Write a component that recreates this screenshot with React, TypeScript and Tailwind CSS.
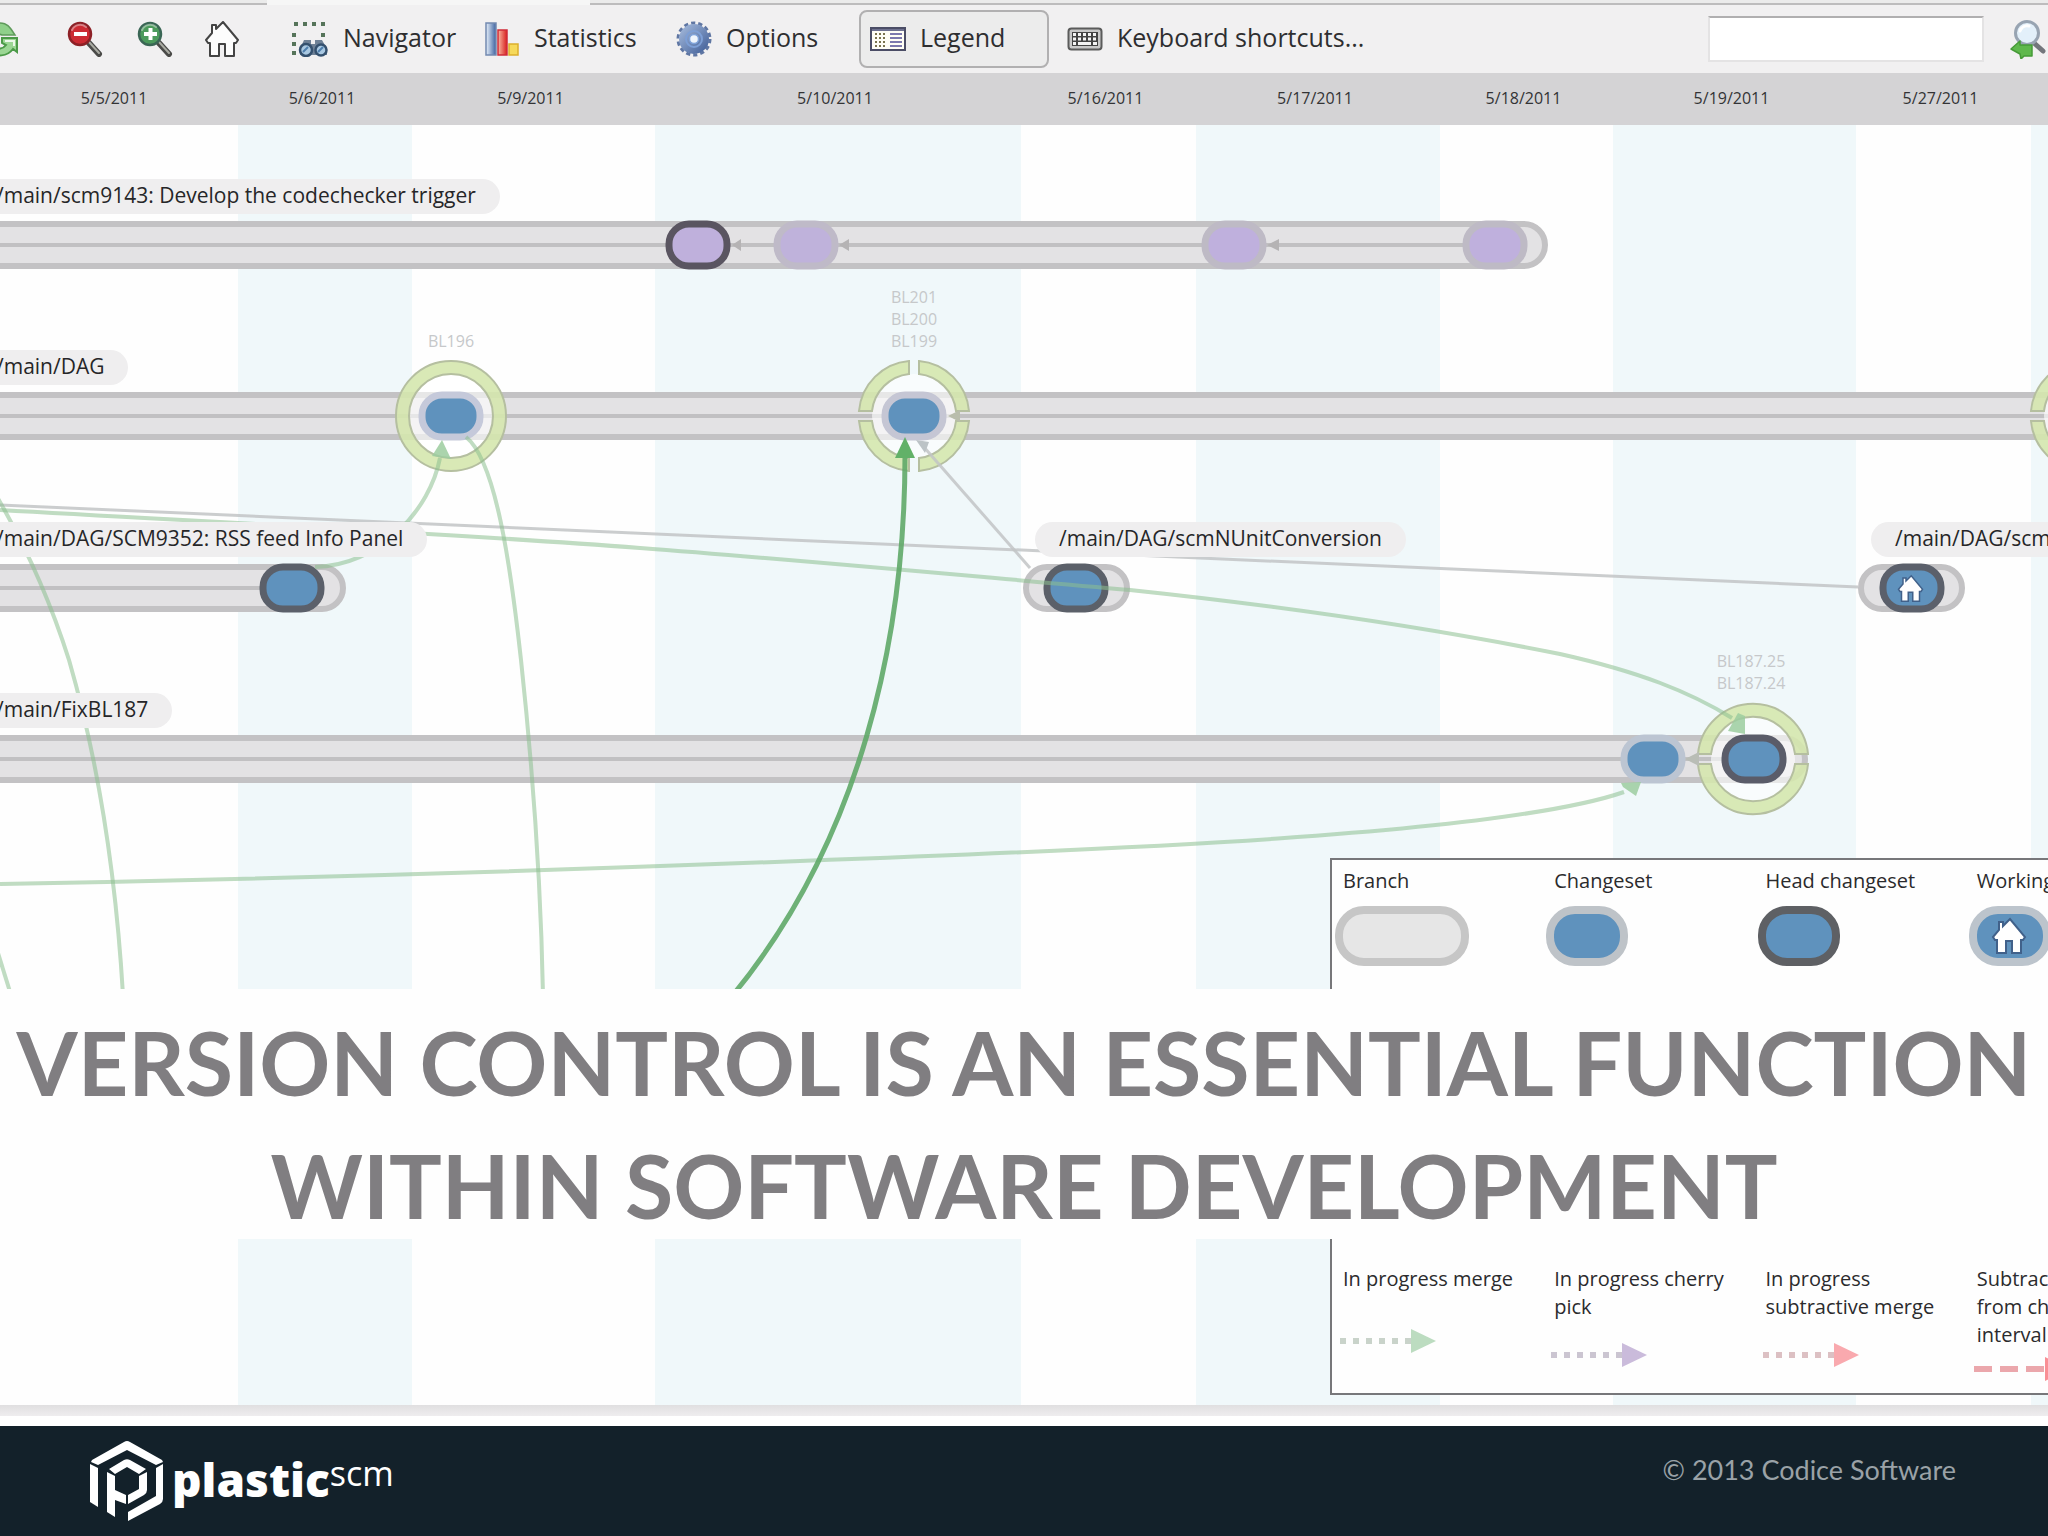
import type { ReactNode } from "react";

const BLUE = "#5f92bd";
const EDGE = "#8cc08f";

const columns = [
  { date: "5/5/2011", shaded: false },
  { date: "5/6/2011", shaded: true },
  { date: "5/9/2011", shaded: false },
  { date: "5/10/2011", shaded: true },
  { date: "5/16/2011", shaded: false },
  { date: "5/17/2011", shaded: true },
  { date: "5/18/2011", shaded: false },
  { date: "5/19/2011", shaded: true },
  { date: "5/27/2011", shaded: false },
  { date: "", shaded: true },
];

const columnGrid =
  "grid -ml-1 grid-cols-[242px_174px_243px_366px_175px_244px_173px_243px_175px_1fr]";

/* ---------- toolbar icons ---------- */

function RefreshIcon() {
  return (
    <svg className="h-9 w-9 shrink-0" viewBox="0 0 36 36" fill="none">
      <path d="M5 15A13 13 0 0 1 29 8l4 6H20a8 8 0 0 0-9 2z" fill="#8fd08a" stroke="#5f9a5b" strokeWidth="1.5" />
      <path d="M20 17h15v14l-4-3c-6 8-17 8-23 3l4-6c4 4 9 3 12-1l-4-2z" fill="#9bd694" stroke="#4c9a48" strokeWidth="2" />
      <path d="M23 20h9v5" stroke="#ecf8ea" strokeWidth="2" />
    </svg>
  );
}

function MagnifierIcon({ color, dark, plus }: { color: string; dark: string; plus?: boolean }) {
  return (
    <svg className="h-9 w-9" viewBox="0 0 36 36" fill="none" strokeLinecap="round">
      <path d="M22 22 32 33" stroke="#4a4a48" strokeWidth="6" />
      <path d="M22 21 32 32" stroke="#a9aaa2" strokeWidth="2" />
      <circle cx="13" cy="13" r="11" fill={color} stroke={dark} strokeWidth="2.5" />
      <path d="M5 9a9 9 0 0 1 14-3" stroke="#fff" strokeOpacity=".4" strokeWidth="2" />
      <path d="M7 13h13" stroke="#fff" strokeWidth="4" strokeLinecap="butt" />
      {plus && <path d="M13.500 7v12" stroke="#fff" strokeWidth="4" strokeLinecap="butt" />}
    </svg>
  );
}

const HOUSE = "M2 19 8 12V4h4v4l7-7 15 18-2 3h-2v13H21V23h-6v12H6V22H4z";

function HomeIcon() {
  return (
    <svg className="h-9 w-9" viewBox="0 0 36 36">
      <path d={HOUSE} fill="#fdfdfd" stroke="#444" strokeWidth="2" strokeLinejoin="round" />
    </svg>
  );
}

function NavigatorIcon() {
  return (
    <svg className="h-9 w-9 shrink-0" viewBox="0 0 36 36">
      <path d="M2 3h32M2 12v22M31 12v5" stroke="#56745a" strokeWidth="4" strokeDasharray="4 5" fill="none" />
      <path d="M12 19h7v4h4v-4h7l5 9v6H8v-6z" fill="#6f8196" />
      <circle cx="14" cy="29" r="6" fill="#a9c8e2" stroke="#34506e" strokeWidth="2.5" />
      <circle cx="29" cy="29" r="5.500" fill="#a9c8e2" stroke="#34506e" strokeWidth="2.500" />
      <path d="M11 31l5-5M26 31l5-5" stroke="#4f7fae" strokeWidth="2" />
    </svg>
  );
}

function StatisticsIcon() {
  return (
    <svg className="h-9 w-9 shrink-0" viewBox="0 0 36 36">
      <defs>
        <linearGradient id="bar-blue" x2="1">
          <stop stopColor="#e8f1fb" />
          <stop offset="1" stopColor="#3d62a0" />
        </linearGradient>
        <linearGradient id="bar-red" x2="1">
          <stop stopColor="#f9b8a0" />
          <stop offset="1" stopColor="#d81f1f" />
        </linearGradient>
      </defs>
      <rect x="2" y="2" width="10" height="32" fill="url(#bar-blue)" stroke="#7389b0" strokeWidth="1.5" />
      <rect x="14" y="9" width="9" height="25" fill="url(#bar-red)" stroke="#cf2b38" strokeWidth="1.5" />
      <rect x="25" y="23" width="9" height="11" fill="#f6d95a" stroke="#dcae2c" strokeWidth="1.5" />
    </svg>
  );
}

function GearIcon() {
  return (
    <svg className="h-9 w-9 shrink-0" viewBox="0 0 36 36">
      <defs>
        <linearGradient id="gear" x2="1" y2="1">
          <stop stopColor="#a9bedf" />
          <stop offset="1" stopColor="#3d5b95" />
        </linearGradient>
      </defs>
      <circle cx="18" cy="18" r="16" fill="none" stroke="#5f76a3" strokeWidth="3" strokeDasharray="4.200 3" />
      <circle cx="18" cy="18" r="15" fill="url(#gear)" />
      <circle cx="18" cy="18" r="8" fill="none" stroke="#7d9fd6" strokeWidth="2" />
      <circle cx="18" cy="18" r="4.500" fill="#eef4fc" stroke="#7fa3da" strokeWidth="1.500" />
    </svg>
  );
}

function LegendIcon() {
  return (
    <svg className="h-6 w-9 shrink-0" viewBox="0 0 36 24">
      <rect x="1" y="1" width="34" height="22" fill="#fffef6" stroke="#4b4d66" strokeWidth="2" />
      <path d="M2 3h32" stroke="#6e7190" strokeWidth="2" />
      <path d="M5 7h11M5 11h11M5 15h11M5 19h11" stroke="#7a744e" strokeWidth="2" strokeDasharray="2 2" />
      <path d="M20 7h12M20 11h12M20 15h12M20 19h12" stroke="#7c79ae" strokeWidth="2" />
    </svg>
  );
}

function KeyboardIcon() {
  return (
    <svg className="h-6 w-9 shrink-0" viewBox="0 0 36 24">
      <rect x="1.500" y="1.500" width="33" height="21" rx="3" fill="#c9c9c9" stroke="#5b5b5b" strokeWidth="2" />
      <rect x="5" y="5" width="26" height="14" fill="#444" />
      <path d="M6 7.500h24M6 12h24" stroke="#f4f4f4" strokeWidth="3" strokeDasharray="3 2" />
      <path d="M6 16.500h3M11 16.500h13M26 16.500h4" stroke="#f4f4f4" strokeWidth="3" />
    </svg>
  );
}

function FindIcon() {
  return (
    <svg className="h-10 w-9" viewBox="0 0 36 40" fill="none" strokeLinecap="round">
      <path d="M24 24 33 32" stroke="#73767c" strokeWidth="5" />
      <circle cx="17" cy="14" r="11.500" fill="#e3f0fa" stroke="#98a4b2" strokeWidth="3" />
      <path d="M10 12a8 8 0 0 1 9-5" stroke="#fff" strokeWidth="3" />
      <path d="M1 30 10 22v4h12v11h-8l-3 3-1-5z" fill="#5fb84c" stroke="#469a37" strokeWidth="1.5" strokeLinejoin="round" />
    </svg>
  );
}

function ToolButton({ icon, label, className }: { icon: ReactNode; label: string; className: string }) {
  return (
    <button type="button" className={`flex shrink-0 items-center whitespace-nowrap ${className}`}>
      {icon}
      <span className="pb-[3px]">{label}</span>
    </button>
  );
}

function Toolbar() {
  return (
    <header className="bg-[#f1f0f1]">
      <div className="flex h-[5px]">
        <div className="w-[267px] border-b-2 border-[#bdbcbd] bg-[#ebebeb]" />
        <div className="w-[323px] bg-[#f6f6f6]" />
        <div className="flex-1 border-b-2 border-[#bdbcbd] bg-[#ebebeb]" />
      </div>
      <div className="flex h-[68px] items-center text-[25px] text-[#2e2e30]">
        <button type="button" aria-label="Refresh" className="flex w-[18px] shrink-0 justify-end overflow-hidden">
          <RefreshIcon />
        </button>
        <button type="button" aria-label="Zoom out" className="ml-[49px]">
          <MagnifierIcon color="#cc2b33" dark="#8d2026" />
        </button>
        <button type="button" aria-label="Zoom in" className="ml-[34px]">
          <MagnifierIcon color="#4c9a5c" dark="#3a6655" plus />
        </button>
        <button type="button" aria-label="Home" className="ml-[31px]">
          <HomeIcon />
        </button>
        <ToolButton className="ml-[52px] w-[192px] gap-[15px]" icon={<NavigatorIcon />} label="Navigator" />
        <ToolButton className="w-[192px] gap-[14px]" icon={<StatisticsIcon />} label="Statistics" />
        <ToolButton className="w-[183px] gap-[14px]" icon={<GearIcon />} label="Options" />
        <ToolButton
          className="h-[58px] w-[190px] gap-[14px] rounded-lg border-2 border-[#b1b0b1] bg-[#ececec] pl-[9px]"
          icon={<LegendIcon />}
          label="Legend"
        />
        <ToolButton className="ml-[18px] gap-[14px]" icon={<KeyboardIcon />} label="Keyboard shortcuts..." />
        <input
          type="search"
          aria-label="Search"
          className="ml-auto h-[46px] w-[276px] border-2 border-[#e4e3e4] border-t-[#b0afb0] bg-white px-2 outline-none"
        />
        <button type="button" aria-label="Find" className="mr-[2px] ml-[26px]">
          <FindIcon />
        </button>
      </div>
    </header>
  );
}

/* ---------- branch diagram ---------- */

function Branch({ x1, x2, cy, line = true }: { x1: number; x2: number; cy: number; line?: boolean }) {
  return (
    <g>
      <rect x={x1 + 3} y={cy - 21} width={x2 - x1 - 6} height="42" rx="21" fill="#e3e2e4" stroke="#c3c2c4" strokeWidth="6" />
      {line && <path d={`M${x1} ${cy}H${x2 - 46}`} stroke="#c1c0c2" strokeWidth="4" />}
    </g>
  );
}

function Changeset({ cx, cy, fill, stroke }: { cx: number; cy: number; fill: string; stroke: string }) {
  return <rect x={cx - 29} y={cy - 21} width="58" height="42" rx="20" fill={fill} stroke={stroke} strokeWidth="7" />;
}

function Ring({ cx, cy, gaps }: { cx: number; cy: number; gaps: "none" | "sides" | "all" }) {
  const arcs = {
    none: "M0-55A55 55 0 1 1 0 55A55 55 0 1 1 0-55ZM0-42A42 42 0 1 0 0 42A42 42 0 1 0 0-42Z",
    sides:
      "M-55-5A55.230 55.230 0 0 1 55-5H42A42.300 42.300 0 0 0-42-5ZM-55 5A55.230 55.230 0 0 0 55 5H42A42.300 42.300 0 0 1-42 5Z",
    all: "M-55-5A55 55 0 0 1-5-55V-42A42 42 0 0 0-42-5ZM55-5A55 55 0 0 0 5-55V-42A42 42 0 0 1 42-5ZM-55 5A55 55 0 0 0-5 55V42A42 42 0 0 1-42 5ZM55 5A55 55 0 0 1 5 55V42A42 42 0 0 0 42 5Z",
  };
  return (
    <g transform={`translate(${cx} ${cy})`}>
      <circle r="42" fill="#fff" fillOpacity=".6" />
      <path d={arcs[gaps]} fill="#d5e7ae" fillOpacity=".9" stroke="#b5bfa0" strokeWidth="2" />
    </g>
  );
}

function Diagram() {
  return (
    <svg
      className="absolute top-0 left-0 h-[1280px] w-[2048px]"
      viewBox="0 125 2048 1280"
      fill="none"
      role="img"
      aria-label="Branch explorer diagram"
    >
      <Branch x1={-40} x2={1548} cy={245} />
      <Branch x1={-40} x2={2140} cy={416} />
      <Branch x1={-40} x2={346} cy={588} />
      <Branch x1={1023} x2={1130} cy={588} line={false} />
      <Branch x1={1858} x2={1965} cy={588} line={false} />
      <Branch x1={-40} x2={1808} cy={759} />

      <Ring cx={451} cy={416} gaps="none" />
      <Ring cx={914} cy={416} gaps="all" />
      <Ring cx={2086} cy={416} gaps="all" />
      <Ring cx={1753} cy={759} gaps="sides" />

      <Changeset cx={698} cy={245} fill="#bfb0dc" stroke="#5a5561" />
      <Changeset cx={806} cy={245} fill="#bfb2db" stroke="#bfbac8" />
      <Changeset cx={1234} cy={245} fill="#bfb0dd" stroke="#bebac5" />
      <Changeset cx={1495} cy={245} fill="#bfb0dd" stroke="#bebac5" />
      <path d="m732 245 9-6v12zm107 0 10-6v12zm428 0 12-6v12z" fill="#b5b3b4" />

      <Changeset cx={451} cy={416} fill={BLUE} stroke="#c5c9da" />
      <Changeset cx={914} cy={416} fill={BLUE} stroke="#c5c6d4" />
      <path d="M948 416l12-6v12z" fill="#b9bdac" />

      <Changeset cx={292} cy={588} fill={BLUE} stroke="#5b606a" />
      <Changeset cx={1076} cy={588} fill={BLUE} stroke="#5b6069" />
      <Changeset cx={1912} cy={588} fill={BLUE} stroke="#5b606b" />
      <g transform="translate(1897 575) scale(.75)">
        <path d={HOUSE} fill="#fff" stroke="#41618a" strokeWidth="2" />
      </g>

      <Changeset cx={1653} cy={759} fill={BLUE} stroke="#bcc5d2" />
      <Changeset cx={1754} cy={759} fill={BLUE} stroke="#5a5c69" />
      <path d="M1685 759l14-7v14z" fill="#b9bdb6" />

      <g stroke="#c2c4c6" strokeWidth="3" strokeOpacity=".85">
        <path d="M0 505 1858 587" />
        <path d="M923 446 1030 568" />
      </g>
      <path d="m916 440 13 2-4 11z" fill="#bcc3c6" />

      <g stroke={EDGE} strokeWidth="4" strokeOpacity=".55">
        <path d="M0 510C210 522 430 532 640 548C800 560 980 577 1130 590C1300 608 1440 630 1560 654C1640 672 1690 692 1732 718" />
        <path d="M-4 495C25 545 50 600 69 660C95 750 115 860 123 995" />
        <path d="M-2 953 11 995" />
        <path d="M466 437C495 460 510 560 521 660C535 790 541 890 543 995" />
        <path d="M315 567C380 565 430 510 440 458" />
        <path d="M0 884C270 879 540 871 800 861C1100 850 1500 835 1624 792" />
      </g>
      <g fill="#9ccd9f" fillOpacity=".85">
        <path d="m442 440 9 19-19-3z" />
        <path d="m1745 734-17-3 10-18 7 3z" />
        <path d="m1641 782-5 14-13-9-2-4z" />
      </g>

      <path d="M733 995C860 840 905 640 905 455" stroke="#5fa968" strokeWidth="5" strokeOpacity=".9" />
      <path d="m905 437 10 21h-20z" fill="#62b168" />
    </svg>
  );
}

function BranchLabel({ className, children }: { className: string; children: ReactNode }) {
  return (
    <div
      className={`absolute h-[35px] bg-[#efeeef] text-[21px] leading-[33px] whitespace-nowrap text-[#262628] ${className}`}
    >
      {children}
    </div>
  );
}

function ChangesetLabels({ className, names }: { className: string; names: string[] }) {
  return (
    <ul className={`absolute w-24 text-center text-base leading-[22px] text-[#c6c8ca] ${className}`}>
      {names.map((name) => (
        <li key={name}>{name}</li>
      ))}
    </ul>
  );
}

/* ---------- legend ---------- */

function LegendPill({ width, fill, stroke, house }: { width: number; fill: string; stroke: string; house?: boolean }) {
  return (
    <svg className="mt-[11px] -ml-2 block h-[60px]" width={width} viewBox={`0 0 ${width} 60`}>
      <rect x="4" y="4" width={width - 8} height="52" rx="25" fill={fill} stroke={stroke} strokeWidth="8" />
      {house && (
        <g transform="translate(22 12)">
          <path d={HOUSE} fill="#fff" stroke="#41618a" strokeWidth="2" />
        </g>
      )}
    </svg>
  );
}

function LegendArrow({ line, head, dash, className }: { line: string; head: string; dash: string; className: string }) {
  return (
    <svg className={`-ml-1 block h-6 w-[98px] ${className}`} viewBox="0 0 98 24">
      <path d="M1 12H74" stroke={line} strokeWidth="6" strokeDasharray={dash} />
      <path d="M72 0 97 12 72 24z" fill={head} />
    </svg>
  );
}

function Legend() {
  return (
    <aside
      aria-label="Legend"
      className="absolute top-[733px] left-[1330px] flex h-[537px] w-[860px] flex-col justify-between border-2 border-[#77777a] bg-[#fefefe] text-xl leading-7 text-[#2b2b2d]"
    >
      <ul className="grid grid-cols-4 pt-[7px] pl-[11px]">
        <li>
          Branch
          <LegendPill width={134} fill="#e6e6e6" stroke="#c6c6c6" />
        </li>
        <li>
          Changeset
          <LegendPill width={82} fill={BLUE} stroke="#bec3c8" />
        </li>
        <li>
          Head changeset
          <LegendPill width={82} fill={BLUE} stroke="#5e6064" />
        </li>
        <li>
          Working
          <LegendPill width={82} fill={BLUE} stroke="#bcc4cc" house />
        </li>
      </ul>
      <ul className="grid grid-cols-4 pb-3 pl-[11px]">
        <li>
          In progress merge
          <LegendArrow line="#c9d3ca" head="#bcdcc0" dash="6 7" className="mt-9" />
        </li>
        <li>
          In progress cherry
          <br />
          pick
          <LegendArrow line="#cbc5d1" head="#cabbdb" dash="6 7" className="mt-[22px]" />
        </li>
        <li>
          In progress
          <br />
          subtractive merge
          <LegendArrow line="#dcc0c3" head="#f9a9ae" dash="6 7" className="mt-[22px]" />
        </li>
        <li>
          Subtractive
          <br />
          from changeset
          <br />
          interval
          <LegendArrow line="#eba7ac" head="#f98f95" dash="18 8" className="mt-2" />
        </li>
      </ul>
    </aside>
  );
}

/* ---------- footer ---------- */

function PlasticLogo() {
  return (
    <svg className="h-[82px] w-[74px]" viewBox="0 0 74 82" fill="#fff">
      <path d="M2 20 34 2q3-2 6 0L72 20l1 2-7 3L37 10 8 25l-7-3z" />
      <path d="M0 24 8 28V67L0 62z" />
      <path d="M73 24V59q0 3-3 5L38 81V72L66 56V28z" />
      <path d="M19 29 34 20q3-1.500 6 0L56 29l-7 5-12-7-12 7z" />
      <path d="M17 32 25 36V50L36 55V64L25 60V77L17 72z" />
      <path d="M57 32V50q0 3-3 5L38 64V55L49 49V36z" />
    </svg>
  );
}

export default function App() {
  return (
    <div className="overflow-hidden bg-white font-['Open_Sans',sans-serif]">
      <Toolbar />
      <div className="h-[52px] bg-[#d4d3d5]">
        <div className={`${columnGrid} text-center text-base leading-[50px] text-[#333335]`}>
          {columns.map((column, index) => (
            <time key={index} className="pr-1.5">
              {column.date}
            </time>
          ))}
        </div>
      </div>

      <main className="relative h-[1280px] overflow-hidden">
        <div className={`${columnGrid} h-full`}>
          {columns.map((column, index) => (
            <div key={index} className={column.shaded ? "bg-[#f0f8fa]" : "bg-[#fefefe]"} />
          ))}
        </div>

        <Diagram />

        <BranchLabel className="top-[54px] -left-1 rounded-r-full pr-6">
          /main/scm9143: Develop the codechecker trigger
        </BranchLabel>
        <BranchLabel className="top-[225px] -left-1 rounded-r-full pr-6">/main/DAG</BranchLabel>
        <BranchLabel className="top-[397px] -left-1 rounded-r-full pr-6">
          /main/DAG/SCM9352: RSS feed Info Panel
        </BranchLabel>
        <BranchLabel className="top-[397px] left-[1035px] rounded-full px-6">/main/DAG/scmNUnitConversion</BranchLabel>
        <BranchLabel className="top-[397px] left-[1871px] rounded-l-full px-6">/main/DAG/scm9370</BranchLabel>
        <BranchLabel className="top-[568px] -left-1 rounded-r-full pr-6">/main/FixBL187</BranchLabel>

        <ChangesetLabels className="top-[205px] left-[403px]" names={["BL196"]} />
        <ChangesetLabels className="top-[161px] left-[866px]" names={["BL201", "BL200", "BL199"]} />
        <ChangesetLabels className="top-[525px] left-[1703px]" names={["BL187.25", "BL187.24"]} />

        <Legend />

        <div className="absolute inset-x-0 top-[864px] flex h-[250px] items-center justify-center bg-[#fefefe] pt-5">
          <h1 className="text-center font-['Lato',sans-serif] text-[88px] leading-[123px] font-bold whitespace-nowrap text-[#807e81]">
            VERSION CONTROL IS AN ESSENTIAL FUNCTION
            <br />
            WITHIN SOFTWARE DEVELOPMENT
          </h1>
        </div>
      </main>
      <div className="mb-[10px] h-[11px] bg-linear-to-b from-[#e0dfe0] to-[#efedef]" />

      <footer className="flex h-[110px] items-center justify-between bg-[#13212a] pr-[92px] pl-[90px]">
        <a href="#" aria-label="Plastic SCM" className="flex items-center text-white">
          <PlasticLogo />
          <span className="ml-2 pb-1 text-[46px] font-extrabold">plastic</span>
          <span className="mb-4 text-[34px]">scm</span>
        </a>
        <p className="pb-[22px] font-['Lato',sans-serif] text-[27px] text-[#9aa2a7]">© 2013 Codice Software</p>
      </footer>
    </div>
  );
}
